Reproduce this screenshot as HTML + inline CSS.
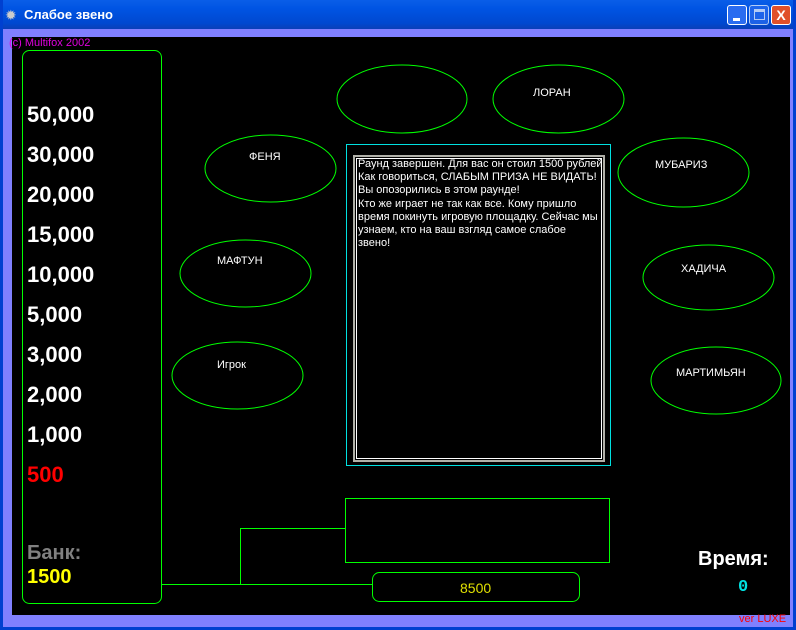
<!DOCTYPE html>
<html><head><meta charset="utf-8"><style>
*{margin:0;padding:0;box-sizing:border-box}
body{width:796px;height:630px;overflow:hidden;background:#8080ff;position:relative;font-family:"Liberation Sans",sans-serif}
.abs{position:absolute;white-space:nowrap}
#title{left:0;top:0;width:796px;height:29px;background:linear-gradient(#0a5ee8,#0054e3 30%,#0048d0 80%,#0a3fb8);}
.m{left:27px;font-weight:bold;font-size:22px;color:#fff;line-height:26px}
.nm{font-size:11px;color:#fff;}
.tb{font-size:11px;color:#fff;line-height:13.2px;white-space:normal}
</style></head><body>
<div class="abs" id="title"></div>
<div class="abs" style="left:0;top:0;width:3px;height:630px;background:#0040d0"></div>
<div class="abs" style="left:793px;top:0;width:3px;height:630px;background:#0040d0"></div>
<div class="abs" style="left:0;top:627px;width:796px;height:3px;background:#0040d0"></div>
<div class="abs" style="left:5px;top:7px;color:#ccc;font-size:14px">✹</div>
<div class="abs" style="left:24px;top:7px;color:#fff;font-weight:bold;font-size:13px">Слабое звено</div>
<div class="abs" style="left:727px;top:5px;width:20px;height:20px;border:1px solid #fff;border-radius:3px;background:#2a6cf0"><div style="position:absolute;left:5px;top:12px;width:7px;height:3px;background:#fff"></div></div>
<div class="abs" style="left:749px;top:5px;width:20px;height:20px;border:1px solid #fff;border-radius:3px;background:#2a6cf0;opacity:.7"><div style="position:absolute;left:4px;top:3px;width:11px;height:11px;border:1px solid #fff;border-top-width:3px"></div></div>
<div class="abs" style="left:771px;top:5px;width:20px;height:20px;border:1px solid #fff;border-radius:3px;background:#e0502a;color:#fff;font-weight:bold;font-size:14px;text-align:center;line-height:18px">X</div>
<div class="abs" style="left:12px;top:37px;width:778px;height:578px;background:#000"></div>
<div class="abs" style="left:9px;top:37px;font-size:11px;color:#e000e0">(c) Multifox 2002</div>
<svg class="abs" style="left:0;top:0" width="796" height="630">
<g fill="none" stroke="#00ff00" stroke-width="1">
<rect x="22.5" y="50.5" width="139" height="553" rx="7"/>
<polyline points="161.5,584.5 372.5,584.5"/>
<polyline points="240.5,584.5 240.5,528.5 345.5,528.5"/>
<rect x="345.5" y="498.5" width="264" height="64"/>
<rect x="372.5" y="572.5" width="207" height="29" rx="7"/>
<ellipse cx="402" cy="99" rx="65" ry="34"/>
<ellipse cx="558.5" cy="99" rx="65.5" ry="34"/>
<ellipse cx="270.5" cy="168.5" rx="65.5" ry="33.5"/>
<ellipse cx="683.5" cy="172.5" rx="65.5" ry="34.5"/>
<ellipse cx="245.5" cy="273.5" rx="65.5" ry="33.5"/>
<ellipse cx="708.5" cy="277.5" rx="65.5" ry="32.5"/>
<ellipse cx="237.5" cy="375.5" rx="65.5" ry="33.5"/>
<ellipse cx="716" cy="380.5" rx="65" ry="33.5"/>
</g>
<rect x="346.5" y="144.5" width="264" height="321" fill="none" stroke="#00e0e0"/>
<rect x="354" y="156" width="250" height="305" fill="none" stroke="#b0b0a8" stroke-width="2"/>
<rect x="356.5" y="158.5" width="245" height="300" fill="none" stroke="#fff"/>
</svg>
<div class="abs m" style="top:102px">50,000</div>
<div class="abs m" style="top:142px">30,000</div>
<div class="abs m" style="top:182px">20,000</div>
<div class="abs m" style="top:222px">15,000</div>
<div class="abs m" style="top:262px">10,000</div>
<div class="abs m" style="top:302px">5,000</div>
<div class="abs m" style="top:342px">3,000</div>
<div class="abs m" style="top:382px">2,000</div>
<div class="abs m" style="top:422px">1,000</div>
<div class="abs m" style="top:462px;color:#ff0000">500</div>
<div class="abs m" style="top:540px;color:#808080;font-size:20px">Банк:</div>
<div class="abs m" style="top:564px;color:#ffff00;font-size:20px">1500</div>
<div class="abs nm" style="left:533px;top:87px">ЛОРАН</div>
<div class="abs nm" style="left:249px;top:151px">ФЕНЯ</div>
<div class="abs nm" style="left:655px;top:159px">МУБАРИЗ</div>
<div class="abs nm" style="left:217px;top:255px">МАФТУН</div>
<div class="abs nm" style="left:681px;top:263px">ХАДИЧА</div>
<div class="abs nm" style="left:217px;top:359px">Игрок</div>
<div class="abs nm" style="left:676px;top:367px">МАРТИМЬЯН</div>
<div class="abs tb" style="left:358px;top:158px;width:246px">Раунд завершен. Для вас он стоил 1500 рублей Как говориться, СЛАБЫМ ПРИЗА НЕ ВИДАТЬ! Вы опозорились в этом раунде!<br>Кто же играет не так как все. Кому пришло время покинуть игровую площадку. Сейчас мы узнаем, кто на ваш взгляд самое слабое<br>звено!</div>
<div class="abs" style="left:460px;top:580px;font-size:14px;color:#e0e000">8500</div>
<div class="abs" style="left:698px;top:548px;font-size:20px;font-weight:bold;color:#fff">Время:</div>
<div class="abs" style="left:738px;top:578px;font-size:17px;font-weight:bold;color:#00e0e0;font-family:'Liberation Mono',monospace">0</div>
<div class="abs" style="left:739px;top:613px;font-size:11px;color:#ff0000">ver LUXE</div>
</body></html>
